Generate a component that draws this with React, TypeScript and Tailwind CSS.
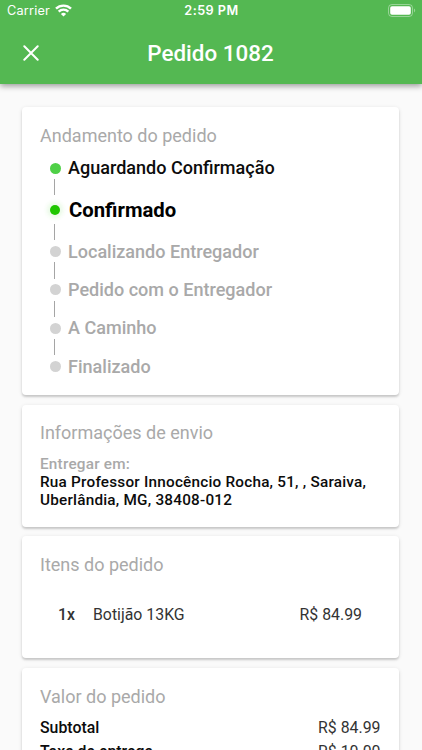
import type { ReactNode } from 'react'

type Step = {
  label: string
  status: 'done' | 'current' | 'pending'
}

const steps: Step[] = [
  { label: 'Aguardando Confirmação', status: 'done' },
  { label: 'Confirmado', status: 'current' },
  { label: 'Localizando Entregador', status: 'pending' },
  { label: 'Pedido com o Entregador', status: 'pending' },
  { label: 'A Caminho', status: 'pending' },
  { label: 'Finalizado', status: 'pending' },
]

const totals = [
  { label: 'Subtotal', value: 'R$ 84.99' },
  { label: 'Taxa de entrega', value: 'R$ 10.00' },
]

function StatusBar() {
  return (
    <div className="grid h-[21px] grid-cols-3 items-center pl-[7px] pr-[6px] font-['Inter',sans-serif] text-[12.7px] leading-[21px]">
      <div className="flex items-center gap-[5px]">
        <span className="tracking-[0.2px]">Carrier</span>
        <svg width="17" height="13" viewBox="0 0 17 13" fill="none" stroke="currentColor" strokeWidth="2.4">
          <path d="M1 4.7a10.6 10.6 0 0 1 15 0" />
          <path d="M3.7 7.7a6.7 6.7 0 0 1 9.6 0" />
          <path d="M8.5 12.6 5.9 9.9a3.8 3.8 0 0 1 5.2 0z" fill="currentColor" stroke="none" />
        </svg>
      </div>
      <span className="text-center font-semibold tracking-[0.45px]">2:59 PM</span>
      <svg className="justify-self-end" width="28" height="13" viewBox="0 0 28 13" fill="none">
        <rect x="0.5" y="0.5" width="24" height="12" rx="3.4" stroke="currentColor" strokeOpacity="0.4" />
        <rect x="2.2" y="2.2" width="20.6" height="8.6" rx="1.8" fill="currentColor" />
        <path d="M26 4.6c1.6.5 1.6 3.3 0 3.8z" fill="currentColor" fillOpacity="0.4" />
      </svg>
    </div>
  )
}

function Card({ title, className, children }: { title: string; className: string; children: ReactNode }) {
  return (
    <section className={`rounded-[4px] bg-white px-[18px] shadow-[0_2px_2px_rgba(0,0,0,0.14),0_1px_4px_rgba(0,0,0,0.11)] ${className}`}>
      <h2 className="text-[18px] leading-[22px] text-[#a9a9a9]">{title}</h2>
      {children}
    </section>
  )
}

function StepRow({ step }: { step: Step }) {
  if (step.status === 'current') {
    return (
      <div className="flex h-[28.5px] items-center gap-[9px] pl-[10px]">
        <span className="h-[10px] w-[10px] rounded-full bg-[#1fc600] shadow-[0_0_4px_3px_rgba(76,217,50,0.12)]" />
        <span className="text-[20.3px] leading-[28px] font-bold text-black">{step.label}</span>
      </div>
    )
  }
  const done = step.status === 'done'
  return (
    <div className="flex h-[22px] items-center gap-[7px] pl-[10px]">
      <span className={`h-[11px] w-[11px] rounded-full ${done ? 'bg-[#4fd047]' : 'bg-[#d3d3d3]'}`} />
      <span className={`text-[18.05px] leading-[22px] font-medium ${done ? 'text-[#0c0c0c]' : 'pt-[0.8px] text-[#a9a9a9]'}`}>
        {step.label}
      </span>
    </div>
  )
}

export default function App() {
  return (
    <div className="flex h-[750px] w-[422px] flex-col overflow-hidden bg-[#fafafa] font-['Roboto',sans-serif]">
      <header className="relative h-[84px] shrink-0 bg-[#54b852] text-white shadow-[0_2px_6px_rgba(0,0,0,0.4)]">
        <StatusBar />
        <div className="grid h-[63px] grid-cols-[62px_1fr_63px] items-center">
          <svg className="ml-[23px]" width="16" height="16" viewBox="0 0 16 16" stroke="currentColor" strokeWidth="2" strokeLinecap="round">
            <path d="M1.3 1.3l13.4 13.4M14.7 1.3L1.3 14.7" />
          </svg>
          <h1 className="text-center text-[22.4px] leading-[28px] font-medium">Pedido 1082</h1>
        </div>
      </header>

      <main className="flex flex-col gap-[9.5px] pt-[23px] pr-[23px] pl-[22px]">
        <Card title="Andamento do pedido" className="h-[288px] pt-[18px]">
          <div className="pt-[10px]">
            {steps.map((step, i) => (
              <div key={step.label}>
                {i > 0 && <div className="ml-[14px] h-[16.4px] w-px bg-[#a5a5a5]" />}
                <StepRow step={step} />
              </div>
            ))}
          </div>
        </Card>

        <Card title="Informações de envio" className="h-[122px] pt-[17px]">
          <p className="pt-[11.5px] text-[15.3px] leading-[18px] font-medium tracking-[0.22px] text-[#a9a9a9]">Entregar em:</p>
          <p className="text-[15.3px] leading-[18px] font-medium tracking-[0.22px] text-[#0c0c0c]">
            Rua Professor Innocêncio Rocha, 51, , Saraiva,
            <br />
            Uberlândia, MG, 38408-012
          </p>
        </Card>

        <Card title="Itens do pedido" className="h-[122px] pt-[18px]">
          <div className="flex items-center pt-[28.5px] pr-[19px] pl-[18px] text-[15.85px] leading-[20px] text-[#333333]">
            <span className="w-[35px] font-medium">1x</span>
            <span className="flex-1">Botijão 13KG</span>
            <span>R$ 84.99</span>
          </div>
        </Card>

        <Card title="Valor do pedido" className="h-[160px] pt-[18px]">
          <div className="pt-[8px] pr-[0.5px]">
            {totals.map((row) => (
              <div key={row.label} className="flex h-[24px] items-center justify-between text-[15.85px] leading-[24px]">
                <span className="font-medium text-[#0c0c0c]">{row.label}</span>
                <span className="text-[#333333]">{row.value}</span>
              </div>
            ))}
          </div>
        </Card>
      </main>
    </div>
  )
}
